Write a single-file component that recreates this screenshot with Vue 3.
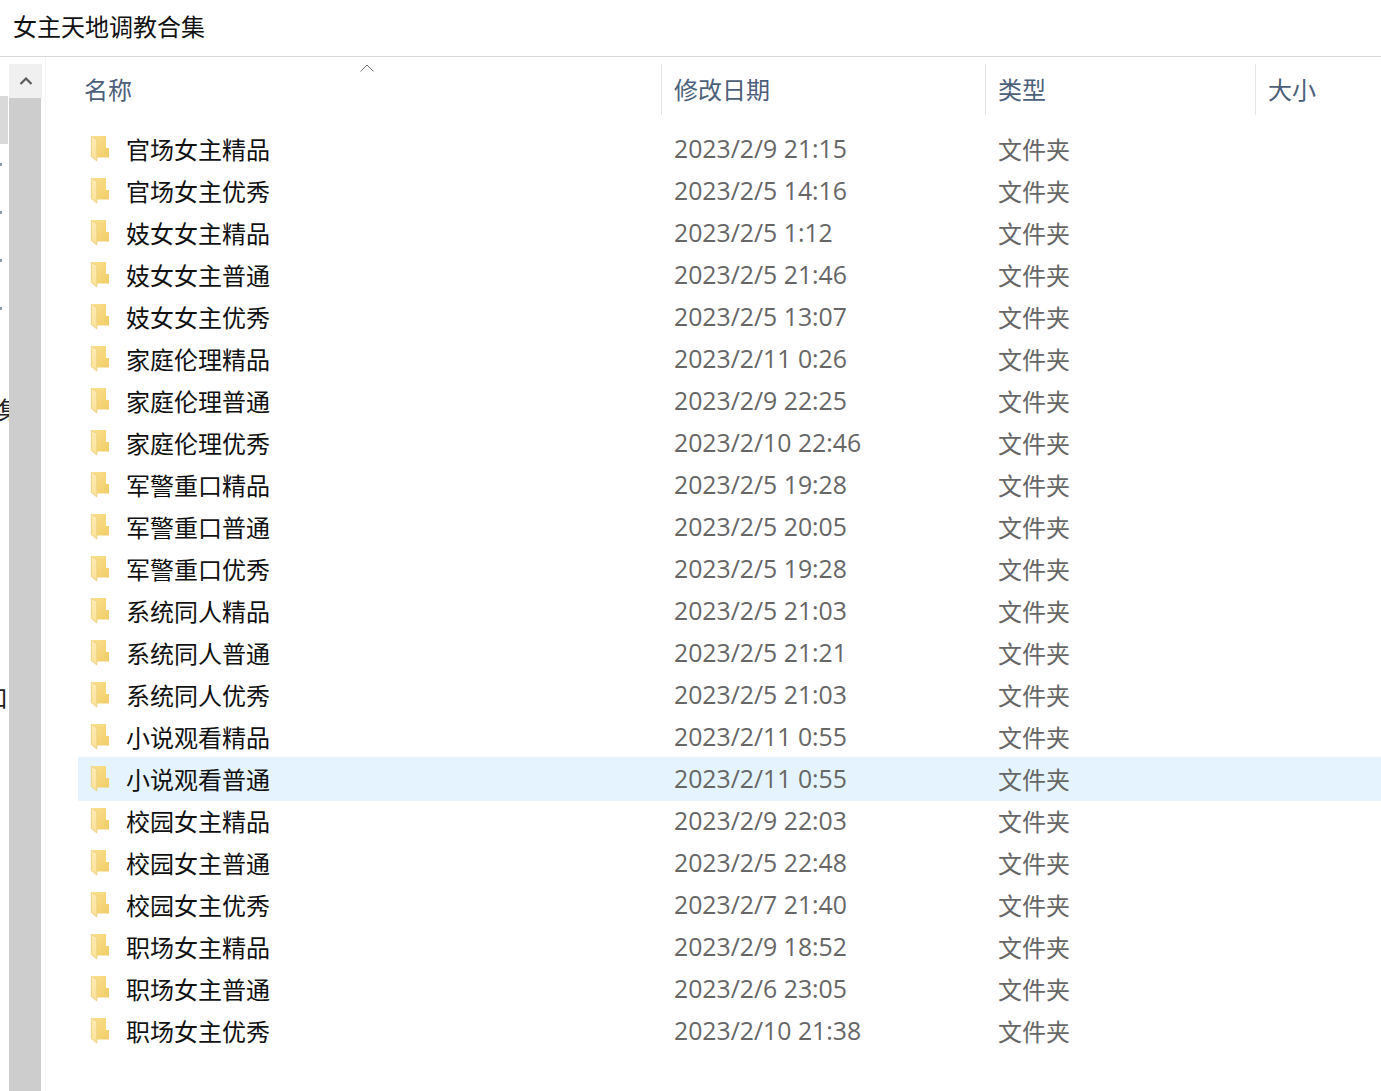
<template>
  <div class="window">
    <header class="title">女主天地调教合集</header>
    <div class="body">
      <nav class="tree">
        <div
          v-for="(item, index) in treeItems"
          :key="index"
          class="tree-row"
          :class="{ 'tree-row--active': index === 0 }"
        >
          <i v-if="item === 'dot'" class="tree-dot"></i>
          <span v-else-if="item" class="tree-label" :class="`tree-label--${index}`">{{ item }}</span>
        </div>
      </nav>
      <div class="scrollbar">
        <div class="scroll-up">
          <svg width="14" height="10" viewBox="0 0 14 10">
            <path d="M1.5 8 L7 2.5 L12.5 8" fill="none" stroke="#5a5a5a" stroke-width="2.2" />
          </svg>
        </div>
        <div class="scroll-thumb"></div>
      </div>
      <main class="files">
        <div class="head">
          <div class="head-cell head-name">
            名称
            <svg class="sort" width="16" height="10" viewBox="0 0 16 10">
              <path d="M1.5 8.5 L8 2 L14.5 8.5" fill="none" stroke="#6d6d6d" stroke-width="1" />
            </svg>
          </div>
          <div class="head-cell">修改日期</div>
          <div class="head-cell">类型</div>
          <div class="head-cell">大小</div>
        </div>
        <div class="list">
          <div
            v-for="row in rows"
            :key="row.name"
            class="row"
            :class="{ 'row--selected': row.name === selected }"
          >
            <div class="cell-name">
              <svg class="folder" width="20" height="27" viewBox="0 0 20 27">
                <defs>
                  <linearGradient id="back" x1="0" y1="0" x2="1" y2="1">
                    <stop offset="0" stop-color="#fbe08f" />
                    <stop offset="1" stop-color="#f1cd68" />
                  </linearGradient>
                  <linearGradient id="front" x1="0" y1="0" x2="0" y2="1">
                    <stop offset="0" stop-color="#fdebb4" />
                    <stop offset="1" stop-color="#fbe29a" />
                  </linearGradient>
                </defs>
                <path d="M2 1 H16 V13 H19 V22.5 H7 V5 Z" fill="url(#back)" />
                <path d="M1.3 1.3 L6.8 4.5 V26 L1.3 21.5 Z" fill="url(#front)" stroke="#e6c566" stroke-width="0.7" />
              </svg>
              <span>{{ row.name }}</span>
            </div>
            <div class="cell-date">{{ row.date }}</div>
            <div class="cell-type">文件夹</div>
          </div>
        </div>
      </main>
    </div>
  </div>
</template>

<script setup>
const selected = '小说观看普通'

const treeItems = ['', 'dot', 'dot', 'dot', 'dot', '', '集', '', '', '', '', '', '口']

const rows = [
  { name: '官场女主精品', date: '2023/2/9 21:15' },
  { name: '官场女主优秀', date: '2023/2/5 14:16' },
  { name: '妓女女主精品', date: '2023/2/5 1:12' },
  { name: '妓女女主普通', date: '2023/2/5 21:46' },
  { name: '妓女女主优秀', date: '2023/2/5 13:07' },
  { name: '家庭伦理精品', date: '2023/2/11 0:26' },
  { name: '家庭伦理普通', date: '2023/2/9 22:25' },
  { name: '家庭伦理优秀', date: '2023/2/10 22:46' },
  { name: '军警重口精品', date: '2023/2/5 19:28' },
  { name: '军警重口普通', date: '2023/2/5 20:05' },
  { name: '军警重口优秀', date: '2023/2/5 19:28' },
  { name: '系统同人精品', date: '2023/2/5 21:03' },
  { name: '系统同人普通', date: '2023/2/5 21:21' },
  { name: '系统同人优秀', date: '2023/2/5 21:03' },
  { name: '小说观看精品', date: '2023/2/11 0:55' },
  { name: '小说观看普通', date: '2023/2/11 0:55' },
  { name: '校园女主精品', date: '2023/2/9 22:03' },
  { name: '校园女主普通', date: '2023/2/5 22:48' },
  { name: '校园女主优秀', date: '2023/2/7 21:40' },
  { name: '职场女主精品', date: '2023/2/9 18:52' },
  { name: '职场女主普通', date: '2023/2/6 23:05' },
  { name: '职场女主优秀', date: '2023/2/10 21:38' }
]
</script>

<style>
html, body { background: #fff; overflow: hidden; }
</style>

<style scoped>
.window {
  width: 1381px;
  height: 1091px;
  overflow: hidden;
  background: #fff;
  font-family: "Open Sans", "Noto Sans CJK SC", sans-serif;
  font-size: 24px;
}
.title {
  height: 56px;
  padding-left: 13px;
  line-height: 54px;
  color: #111;
  border-bottom: 1px solid #d9d9d9;
}
.body {
  display: flex;
  height: 1034px;
}
.tree {
  width: 9px;
  flex: none;
  padding-top: 39px;
  box-sizing: border-box;
  overflow: hidden;
}
.tree-row {
  height: 48px;
  margin-right: 1px;
  display: flex;
  justify-content: flex-end;
  align-items: center;
}
.tree-row--active { background: #d9d9d9; }
.tree-dot {
  align-self: flex-start;
  margin: 19px auto 0 0;
  width: 2px;
  height: 3px;
  background: #8a98a5;
}
.tree-label {
  flex: none;
  color: #222;
  margin-right: -14px;
}
.tree-label--12 { margin-right: 0; }
.scrollbar {
  width: 33px;
  flex: none;
  padding-top: 7px;
  display: flex;
  flex-direction: column;
}
.scroll-up {
  height: 34px;
  background: #f0f0f0;
  display: flex;
  align-items: center;
  justify-content: center;
}
.scroll-thumb {
  flex: 1;
  width: 32px;
  background: #cdcdcd;
}
.files {
  flex: 1;
  margin-left: 3px;
  padding-left: 32px;
  border-left: 1px solid #f5f5f5;
  min-width: 0;
}
.head {
  display: grid;
  grid-template-columns: 583px 324px 270px 1fr;
  padding-top: 7px;
  height: 58px;
  box-sizing: border-box;
}
.head-cell {
  position: relative;
  height: 51px;
  box-sizing: border-box;
  padding: 0 0 2px 12px;
  display: flex;
  align-items: center;
  border-left: 1px solid #e5e5e5;
  color: #4c607a;
}
.head-name {
  border-left: none;
  padding-left: 6px;
}
.sort {
  position: absolute;
  left: 281px;
  top: -1px;
}
.list {
  padding-top: 14px;
}
.row {
  display: grid;
  grid-template-columns: 583px 324px 1fr;
  height: 44px;
  margin-top: -2px;
  padding-bottom: 2px;
  box-sizing: border-box;
  align-items: center;
}
.row--selected { background: #e5f3ff; }
.cell-name {
  display: flex;
  align-items: center;
  color: #111;
  padding-left: 12px;
}
.folder {
  margin-right: 16px;
  flex: none;
}
.cell-date,
.cell-type {
  color: #666;
  padding-left: 13px;
}
.cell-date { font-size: 24.8px; }
</style>
